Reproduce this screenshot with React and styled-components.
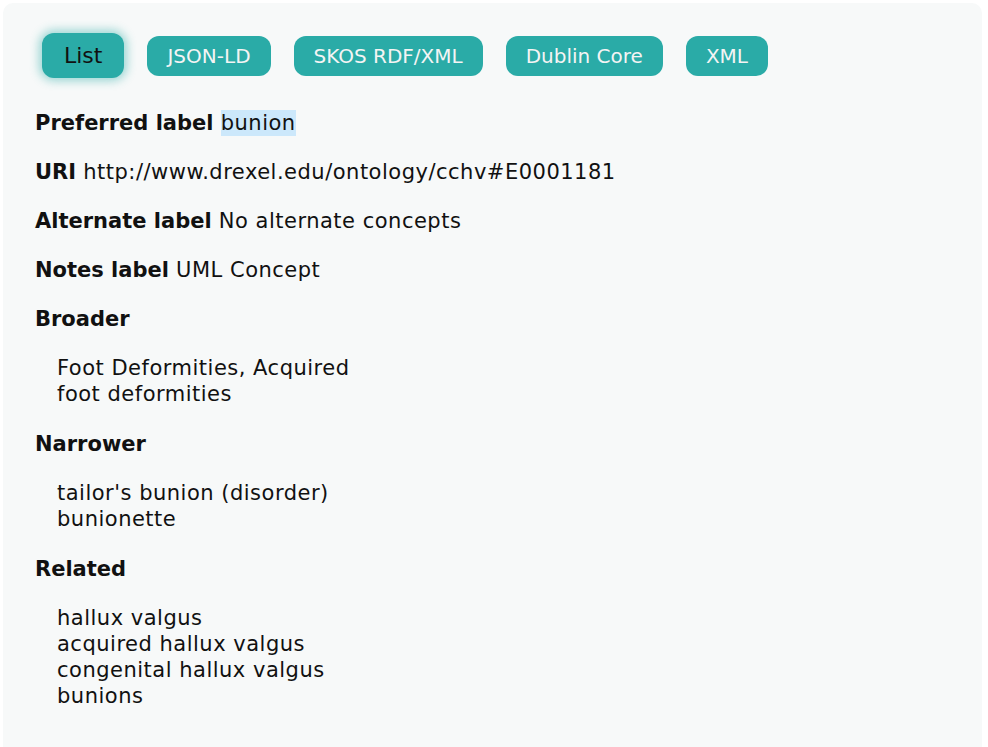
import React from "react";
import styled, { createGlobalStyle } from "styled-components";

const GlobalStyle = createGlobalStyle`
  html, body {
    margin: 0;
    padding: 0;
    background: #ffffff;
  }
  body {
    font-family: "DejaVu Sans", Verdana, sans-serif;
    color: #111;
  }
`;

const Panel = styled.div`
  margin: 3px 6px 0 3px;
  min-height: 744px;
  box-sizing: border-box;
  padding: 30px 32px 20px;
  background: #f7f9f9;
  border-radius: 10px 10px 0 0;
`;

const Tabs = styled.div`
  display: flex;
  align-items: center;
  gap: 23px;
  margin-left: 7px;
  height: 45px;
  margin-bottom: 32px;
`;

const Tab = styled.button`
  font-family: "DejaVu Sans", Tahoma, sans-serif;
  font-size: ${(p) => (p.$active ? "22px" : "20px")};
  height: ${(p) => (p.$active ? "45px" : "40px")};
  padding: 0 ${(p) => (p.$active ? "22px" : "20px")};
  border: none;
  border-radius: 12px;
  background: #2aaba7;
  color: ${(p) => (p.$active ? "#111" : "#f4f4f4")};
  box-shadow: ${(p) => (p.$active ? "0 0 10px 3px rgba(42,171,167,0.45)" : "none")};
  cursor: pointer;
`;

const Field = styled.div`
  font-size: 21px;
  line-height: 26px;
  letter-spacing: 0.5px;
  margin-bottom: 23px;
`;

const Label = styled.span`
  font-weight: bold;
  letter-spacing: 0;
`;

const Selected = styled.span`
  background: #cce8fb;
  padding: 1px 0;
`;

const Items = styled.div`
  font-size: 21px;
  line-height: 26px;
  letter-spacing: 0.5px;
  padding-left: 22px;
  margin-bottom: 24px;
`;

const tabs = ["List", "JSON-LD", "SKOS RDF/XML", "Dublin Core", "XML"];

const groups = [
  { title: "Broader", items: ["Foot Deformities, Acquired", "foot deformities"] },
  { title: "Narrower", items: ["tailor's bunion (disorder)", "bunionette"] },
  {
    title: "Related",
    items: ["hallux valgus", "acquired hallux valgus", "congenital hallux valgus", "bunions"],
  },
];

export default function App() {
  return (
    <>
      <GlobalStyle />
      <Panel>
        <Tabs>
          {tabs.map((t, i) => (
            <Tab key={t} $active={i === 0}>
              {t}
            </Tab>
          ))}
        </Tabs>
        <Field>
          <Label>Preferred label</Label> <Selected>bunion</Selected>
        </Field>
        <Field>
          <Label>URI</Label> http://www.drexel.edu/ontology/cchv#E0001181
        </Field>
        <Field>
          <Label>Alternate label</Label> No alternate concepts
        </Field>
        <Field>
          <Label>Notes label</Label> UML Concept
        </Field>
        {groups.map((g) => (
          <React.Fragment key={g.title}>
            <Field>
              <Label>{g.title}</Label>
            </Field>
            <Items>
              {g.items.map((it) => (
                <div key={it}>{it}</div>
              ))}
            </Items>
          </React.Fragment>
        ))}
      </Panel>
    </>
  );
}
